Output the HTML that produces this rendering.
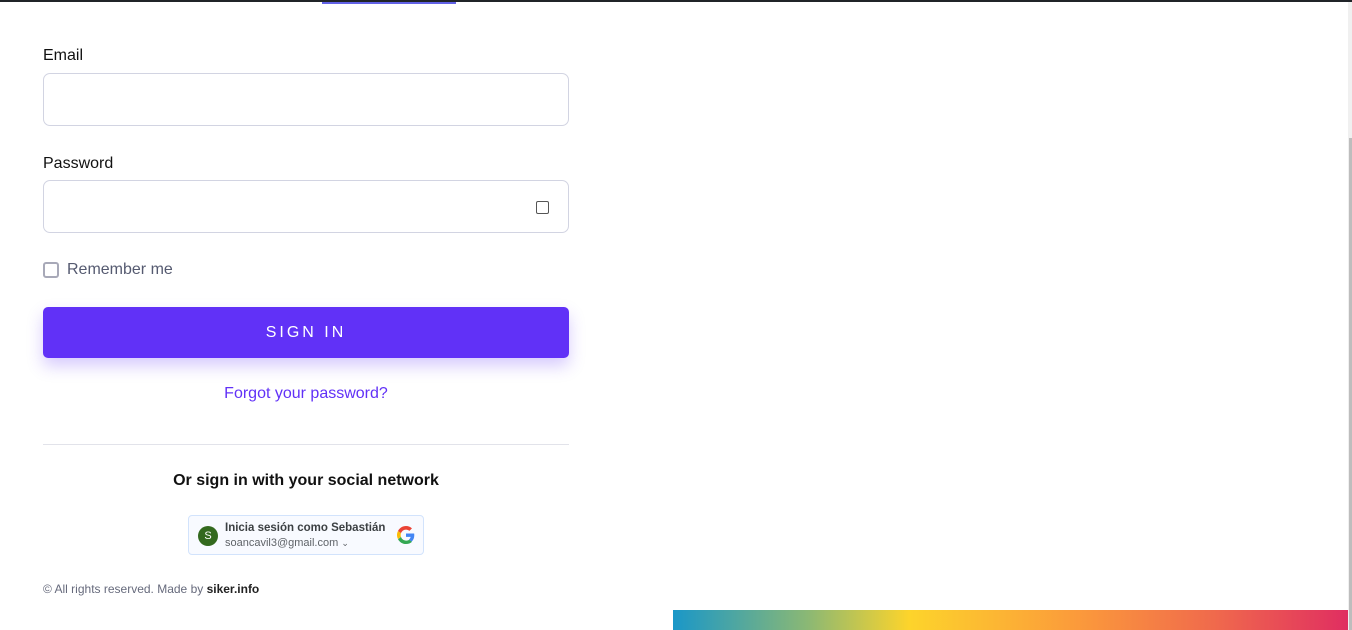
<!DOCTYPE html>
<html><head><meta charset="utf-8"><style>
*{box-sizing:border-box;margin:0;padding:0}
body{width:1352px;height:630px;overflow:hidden;background:#fff;font-family:"Liberation Sans",Arial,sans-serif;position:relative}
.top{position:absolute;left:0;top:0;width:1352px;height:2px;background:#202428}
.lbl{position:absolute;left:43px;font-size:16px;color:#111;font-weight:500}
.inp{position:absolute;left:43px;width:526px;height:53px;border:1px solid #d2d4e2;border-radius:7px;background:#fff}
.chk{position:absolute;width:13px;height:13px;border:1.5px solid #666;border-radius:2px}
.btn{position:absolute;left:43px;top:307px;width:526px;height:51px;background:#6131f7;border-radius:5px;box-shadow:0 8px 16px rgba(97,49,247,.25);color:#fff;font-size:16px;letter-spacing:3px;text-align:center;line-height:51px}
</style></head><body>
<div class="top"></div>
<div style="position:absolute;left:322px;top:2px;width:134px;height:2px;background:#6262e6"></div>
<div class="lbl" style="top:47px">Email</div>
<div class="inp" style="top:73px"></div>
<div class="lbl" style="top:155px">Password</div>
<div class="inp" style="top:180px"></div>
<div class="chk" style="left:536px;top:201px;border-color:#555"></div>
<div style="position:absolute;left:43px;top:262px;width:16px;height:16px;border:2px solid #a8a9b8;border-radius:3px"></div>
<div style="position:absolute;left:67px;top:261px;font-size:16px;color:#555a70">Remember me</div>
<div class="btn">SIGN IN</div>
<div style="position:absolute;left:43px;width:526px;top:385px;text-align:center;font-size:16px;color:#6131f7">Forgot your password?</div>
<div style="position:absolute;left:43px;top:444px;width:526px;height:1px;background:#e2e3ea"></div>
<div style="position:absolute;left:43px;width:526px;top:472px;text-align:center;font-size:16px;font-weight:bold;color:#111">Or sign in with your social network</div>
<div style="position:absolute;left:188px;top:515px;width:236px;height:40px;border:1px solid #d2e3fc;border-radius:4px;background:#f8faff">
 <div style="position:absolute;left:9px;top:10px;width:20px;height:20px;border-radius:50%;background:#33691e;color:#fff;font-size:11px;text-align:center;line-height:20px">S</div>
 <div style="position:absolute;left:36px;top:6px;font-size:11.5px;font-weight:bold;color:#3c4043">Inicia sesión como Sebastián</div>
 <div style="position:absolute;left:36px;top:21px;font-size:11px;color:#5f6368">soancavil3@gmail.com <span style="font-size:9px">&#8964;</span></div>
 <svg style="position:absolute;left:208px;top:10px" width="18" height="18" viewBox="0 0 48 48"><path fill="#EA4335" d="M24 9.5c3.5 0 6.6 1.2 9.1 3.6l6.8-6.8C35.8 2.4 30.3 0 24 0 14.6 0 6.6 5.4 2.7 13.3l7.9 6.1C12.5 13.6 17.8 9.5 24 9.5z"/><path fill="#4285F4" d="M46.1 24.5c0-1.6-.1-3.1-.4-4.5H24v9h12.4c-.5 2.9-2.200 5.3-4.6 7l7.2 5.6c4.2-3.9 7.1-9.7 7.1-17.1z"/><path fill="#FBBC05" d="M10.5 28.6c-.5-1.400-.8-3-.8-4.6s.3-3.200.8-4.6l-7.9-6.1C1 16.6 0 20.2 0 24s1 7.4 2.7 10.7l7.8-6.1z"/><path fill="#34A853" d="M24 48c6.5 0 11.9-2.1 15.9-5.8l-7.2-5.6c-2.2 1.5-5 2.4-8.7 2.4-6.2 0-11.5-4.2-13.4-9.9l-7.9 6.1C6.6 42.6 14.6 48 24 48z"/></svg>
</div>
<div style="position:absolute;left:43px;top:582px;font-size:12px;color:#666a7c">© All rights reserved. Made by <b style="color:#222">siker.info</b></div>
<div style="position:absolute;left:1348px;top:2px;width:4px;height:628px;background:#f0f0f0"></div>
<div style="position:absolute;left:1349px;top:138px;width:3px;height:492px;background:#bdbdbd"></div>
<div style="position:absolute;left:673px;top:610px;width:675px;height:20px;background:linear-gradient(90deg,#1a97c8 0%,#8bb874 20%,#fdd42b 35%,#fb9a3b 60%,#f06a4c 80%,#e02e61 100%)"></div>
</body></html>
